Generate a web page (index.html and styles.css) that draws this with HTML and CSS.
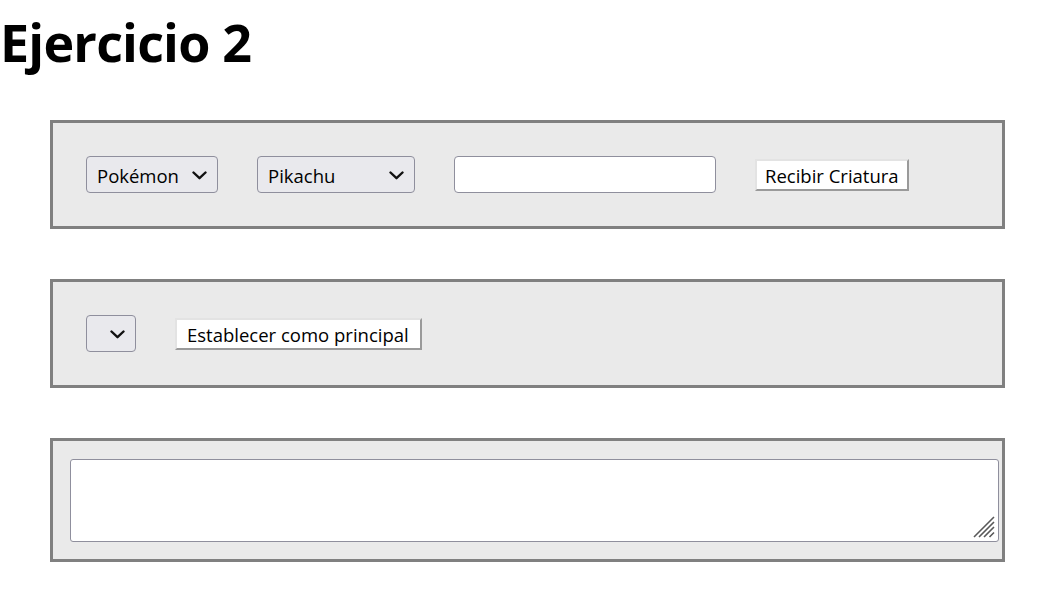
FILE: index.html
```html
<!DOCTYPE html>
<html lang="es">
<head>
<meta charset="utf-8">
<title>Ejercicio 2</title>
<link rel="stylesheet" href="styles.css">
</head>
<body>
<h1 class="title">Ejercicio 2</h1>
<main class="panels">
  <section class="panel panel-controls">
    <div class="select select-type">
      <select><option>Pokémon</option></select>
      <svg class="chev" width="15" height="9" viewBox="0 0 15 9"><path d="M1.5 1.5 L7.5 7.2 L13.5 1.5" fill="none" stroke="#111" stroke-width="2.4" stroke-linecap="round" stroke-linejoin="round"/></svg>
    </div>
    <div class="select select-creature">
      <select><option>Pikachu</option></select>
      <svg class="chev" width="15" height="9" viewBox="0 0 15 9"><path d="M1.5 1.5 L7.5 7.2 L13.5 1.5" fill="none" stroke="#111" stroke-width="2.4" stroke-linecap="round" stroke-linejoin="round"/></svg>
    </div>
    <input class="field" type="text">
    <button class="btn" type="button">Recibir Criatura</button>
  </section>
  <section class="panel panel-controls">
    <div class="select select-empty">
      <select><option></option></select>
      <svg class="chev" width="15" height="9" viewBox="0 0 15 9"><path d="M1.5 1.5 L7.5 7.2 L13.5 1.5" fill="none" stroke="#111" stroke-width="2.4" stroke-linecap="round" stroke-linejoin="round"/></svg>
    </div>
    <button class="btn btn-wide" type="button">Establecer como principal</button>
  </section>
  <section class="panel panel-output">
    <div class="textarea-wrap">
      <textarea class="output"></textarea>
      <svg class="grip" width="24" height="24" viewBox="0 0 24 24"><path d="M2 22 L22 2 M7 22 L22 7 M12 22 L22 12 M17.5 22 L22 17.5" stroke="#595959" stroke-width="1.6" fill="none"/></svg>
    </div>
  </section>
</main>
</body>
</html>
```
FILE: styles.css
```css
html, body {
  margin: 0;
  padding: 0;
  background: #ffffff;
}
body {
  font-family: "Open Sans", "Noto Sans", sans-serif;
  font-size: 18.5px;
  color: #000;
}
.title {
  margin: 0;
  padding-top: 6px;
  font-size: 52px;
  font-weight: 700;
  line-height: 72px;
  letter-spacing: -0.8px;
}
.panels {
  display: flex;
  flex-direction: column;
  gap: 50px;
  margin: 42px 0 0 50px;
  width: 955px;
}
.panel {
  box-sizing: border-box;
  background: #eaeaea;
  border: 3px solid #808080;
}
.panel-controls {
  display: flex;
  align-items: center;
  gap: 39px;
  padding: 33px;
  height: 109px;
}
.panel-output {
  padding: 18px 17px 17px;
}
.select {
  box-sizing: border-box;
  display: flex;
  align-items: center;
  height: 37px;
  padding: 1px 10px 0;
  background: #e9e9ed;
  border: 1px solid #8f8f9d;
  border-radius: 4px;
}
.select select {
  appearance: none;
  -webkit-appearance: none;
  flex: 1;
  min-width: 0;
  border: none;
  background: transparent;
  font: inherit;
  color: #000;
  padding: 0;
  margin: 0;
  outline: none;
}
.chev {
  flex: none;
  display: block;
}
.select-type { width: 132px; }
.select-creature { width: 158px; }
.select-empty { width: 50px; }
.field {
  box-sizing: border-box;
  width: 262px;
  height: 37px;
  margin: 0;
  border: 1px solid #8f8f9d;
  border-radius: 4px;
  background: #fff;
  font: inherit;
}
.btn {
  box-sizing: border-box;
  height: 32px;
  margin: 0;
  padding: 1px 8px 0 8px;
  font: inherit;
  line-height: 27px;
  color: #000;
  background: #fff;
  border-style: solid;
  border-width: 2px;
  border-color: #e3e3e3 #9a9a9a #9a9a9a #e3e3e3;
  border-radius: 0;
}
.btn-wide {
  padding-left: 10px;
  padding-right: 11px;
}
.textarea-wrap {
  position: relative;
  width: 929px;
  height: 83px;
}
.output {
  box-sizing: border-box;
  display: block;
  width: 929px;
  height: 83px;
  margin: 0;
  resize: none;
  border: 1px solid #8f8f9d;
  border-radius: 3px;
  background: #fff;
  font: inherit;
}
.grip {
  position: absolute;
  right: 3px;
  bottom: 3px;
}
```
